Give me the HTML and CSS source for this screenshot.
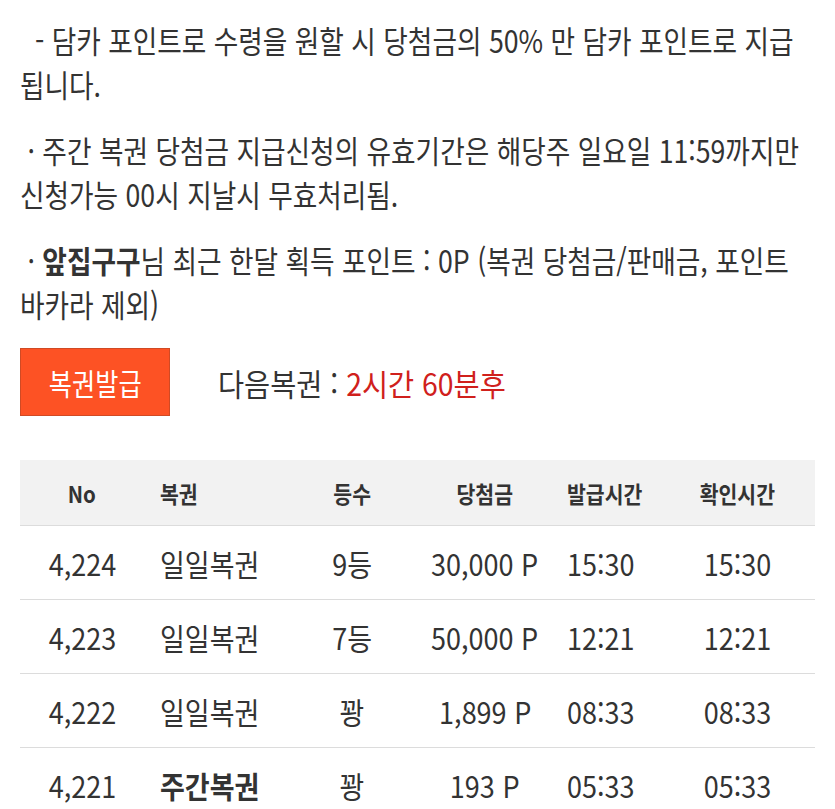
FILE: index.html
```html
<!DOCTYPE html>
<html lang="ko">
<head>
<meta charset="utf-8">
<title>복권</title>
<link rel="stylesheet" href="styles.css">
</head>
<body>
<div class="content">
  <p class="note cond">&nbsp; - 담카 포인트로 수령을 원할 시 당첨금의 50% 만 담카 포인트로 지급 됩니다.</p>
  <p class="note cond">&nbsp;· 주간 복권 당첨금 지급신청의 유효기간은 해당주 일요일 11:59까지만 신청가능 00시 지날시 무효처리됨.</p>
  <p class="note cond">&nbsp;· <b>앞집구구</b>님 최근 한달 획득 포인트 : 0P (복권 당첨금/판매금, 포인트 바카라 제외)</p>

  <div class="issue-row">
    <button class="issue-btn" type="button"><span class="t">복권발급</span></button>
    <div class="next"><span class="t">다음복권 : <span class="red">2시간 60분후</span></span></div>
  </div>

  <div class="table">
    <div class="row head">
      <div class="c c1"><span class="t">No</span></div>
      <div class="c c2"><span class="t">복권</span></div>
      <div class="c c3"><span class="t">등수</span></div>
      <div class="c c4"><span class="t">당첨금</span></div>
      <div class="c c5"><span class="t">발급시간</span></div>
      <div class="c c6"><span class="t">확인시간</span></div>
    </div>
    <div class="row">
      <div class="c c1"><span class="t">4,224</span></div>
      <div class="c c2"><span class="t">일일복권</span></div>
      <div class="c c3"><span class="t">9등</span></div>
      <div class="c c4"><span class="t">30,000 P</span></div>
      <div class="c c5"><span class="t">15:30</span></div>
      <div class="c c6"><span class="t">15:30</span></div>
    </div>
    <div class="row">
      <div class="c c1"><span class="t">4,223</span></div>
      <div class="c c2"><span class="t">일일복권</span></div>
      <div class="c c3"><span class="t">7등</span></div>
      <div class="c c4"><span class="t">50,000 P</span></div>
      <div class="c c5"><span class="t">12:21</span></div>
      <div class="c c6"><span class="t">12:21</span></div>
    </div>
    <div class="row">
      <div class="c c1"><span class="t">4,222</span></div>
      <div class="c c2"><span class="t">일일복권</span></div>
      <div class="c c3"><span class="t">꽝</span></div>
      <div class="c c4"><span class="t">1,899 P</span></div>
      <div class="c c5"><span class="t">08:33</span></div>
      <div class="c c6"><span class="t">08:33</span></div>
    </div>
    <div class="row">
      <div class="c c1"><span class="t">4,221</span></div>
      <div class="c c2"><span class="t"><b>주간복권</b></span></div>
      <div class="c c3"><span class="t">꽝</span></div>
      <div class="c c4"><span class="t">193 P</span></div>
      <div class="c c5"><span class="t">05:33</span></div>
      <div class="c c6"><span class="t">05:33</span></div>
    </div>
  </div>
</div>
</body>
</html>
```

FILE: styles.css
```css
html, body {
  margin: 0;
  padding: 0;
  overflow: hidden;
  background: #ffffff;
}
body {
  font-family: "Noto Sans CJK KR", "Noto Sans", sans-serif;
  color: #333333;
}
.content {
  width: 795px;
  padding: 18px 0 0 20px;
}
.note {
  margin: 0 0 22px 0;
  font-size: 31px;
  line-height: 44px;
  word-break: keep-all;
}
.cond {
  width: calc(795px / 0.86);
  transform: scaleX(0.86);
  transform-origin: 0 0;
}
.note b {
  font-weight: 700;
}
.issue-row {
  display: flex;
  align-items: center;
  gap: 48px;
  margin-top: 20px;
}
.issue-btn {
  width: 150px;
  height: 68px;
  background: #fd5224;
  border: 1px solid #d04a24;
  color: #ffffff;
  font-family: inherit;
  font-size: 30px;
  padding: 0;
  display: flex;
  align-items: center;
  justify-content: center;
}
.t {
  display: inline-block;
  transform: scaleX(0.9);
  transform-origin: center;
  white-space: nowrap;
}
.issue-btn .t {
  transform: scaleX(0.84);
}
.next {
  font-size: 31px;
  color: #333333;
}
.next .t {
  transform: scaleX(0.915);
  transform-origin: left center;
}
.red {
  color: #d0201c;
}
.table {
  margin-top: 44px;
  width: 795px;
}
.row {
  display: grid;
  grid-template-columns: 124px 146px 124px 142px 121px 120px;
  height: 73px;
  border-bottom: 1px solid #dcdcdc;
  align-items: center;
  font-size: 30px;
  color: #333333;
}
.row.head {
  height: 65px;
  background: #f2f2f2;
  font-size: 23px;
  font-weight: 700;
  color: #333333;
}
.row.head .t {
  transform: scaleX(0.89);
}
.c {
  text-align: center;
}
.c2, .c5 {
  text-align: left;
}
.c2 {
  padding-left: 16px;
}
.c5 {
  padding-left: 11px;
}
.c2 .t, .c5 .t,
.row.head .c2 .t, .row.head .c5 .t {
  transform-origin: left center;
}
```
